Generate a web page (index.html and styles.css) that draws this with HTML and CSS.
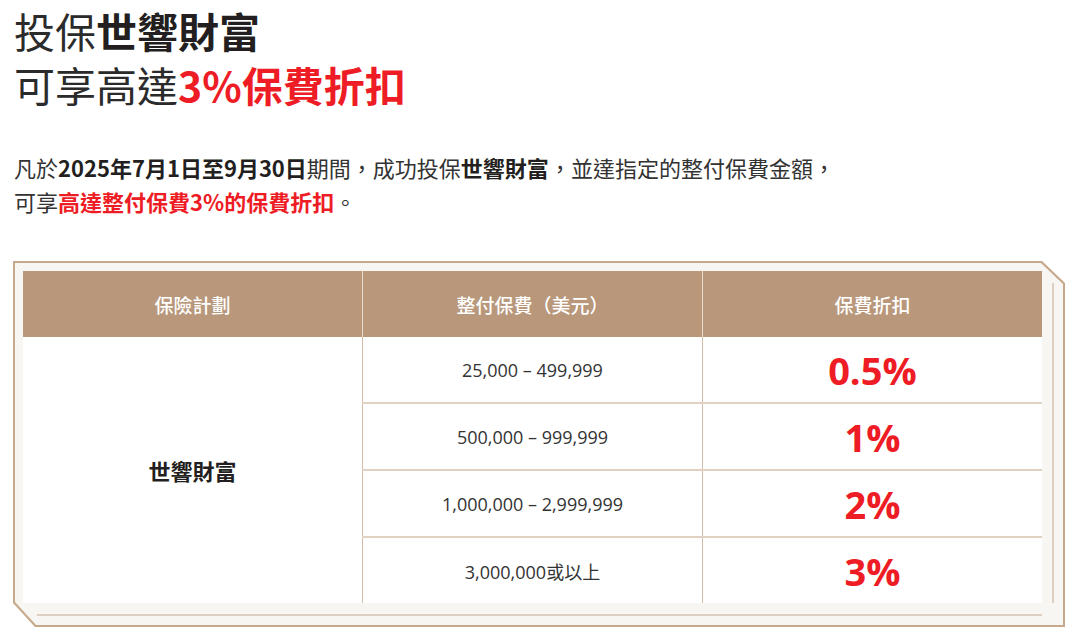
FILE: index.html
```html
<!DOCTYPE html>
<html lang="zh-Hant">
<head>
<meta charset="utf-8">
<title>投保世響財富</title>
<link rel="stylesheet" href="styles.css">
</head>
<body>
<div class="page">
  <h1 class="title">投保<b>世響財富</b><br>可享高達<span class="red">3%保費折扣</span></h1>
  <p class="intro">凡於<b class="num">2025年7月1日至9月30日</b>期間，成功投保<b>世響財富</b>，並達指定的整付保費金額，<br>可享<span class="red">高達整付保費3%的保費折扣</span>。</p>
  <div class="frame">
    <div class="frame-inner">
      <table class="rates">
        <thead>
          <tr><th>保險計劃</th><th>整付保費（美元）</th><th>保費折扣</th></tr>
        </thead>
        <tbody>
          <tr><td class="plan" rowspan="4">世響財富</td><td class="range">25,000 – 499,999</td><td class="pct">0.5%</td></tr>
          <tr><td class="range">500,000 – 999,999</td><td class="pct">1%</td></tr>
          <tr><td class="range">1,000,000 – 2,999,999</td><td class="pct">2%</td></tr>
          <tr><td class="range">3,000,000或以上</td><td class="pct">3%</td></tr>
        </tbody>
      </table>
    </div>
  </div>
</div>
</body>
</html>
```
FILE: styles.css
```css
html, body { margin: 0; background: #fff; }
body {
  font-family: "Noto Sans CJK TC", "Noto Sans", sans-serif;
  color: #333;
}
.page { padding: 3px 0 0 14px; }
.title {
  margin: 0;
  font-size: 41px;
  line-height: 54px;
  font-weight: 400;
  color: #2b2b2b;
}
.title b { font-weight: 700; color: #231f20; }
.red { color: #ee1c25; font-weight: 700; }
.intro {
  margin: 39px 0 0;
  font-size: 22px;
  line-height: 34px;
  color: #333;
}
.intro b { font-weight: 700; color: #231f20; }
.frame {
  margin: 43px 0 0 -1px;
  width: 1048px;
  height: 362px;
  padding: 2px;
  background: #c6a88b;
  clip-path: polygon(0 0, calc(100% - 23px) 0, 100% 22px, 100% 100%, 22px 100%, 0 calc(100% - 24px));
}
.frame-inner {
  position: relative;
  height: 100%;
  box-sizing: border-box;
  padding: 8px 21px 22px 8px;
  background: #f8f6f2;
  clip-path: polygon(0 0, calc(100% - 22px) 0, 100% 21px, 100% 100%, 21px 100%, 0 calc(100% - 23px));
}
.frame-inner::before {
  content: "";
  position: absolute;
  right: 9px;
  top: 20px;
  bottom: 22px;
  width: 2px;
  background: #ddd0c3;
}
.frame-inner::after {
  content: "";
  position: absolute;
  left: 22px;
  right: 21px;
  bottom: 9px;
  height: 2px;
  background: #ddd0c3;
}
.rates {
  width: 1019px;
  border-collapse: collapse;
  table-layout: fixed;
  background: #fff;
}
.rates th {
  height: 66px;
  padding: 0;
  background: #b8977b;
  color: #fff;
  font-size: 19px;
  font-weight: 500;
  border-left: 1px solid #e9ddd1;
}
.rates th:first-child { border-left: none; }
.rates td {
  height: 65px;
  padding: 0;
  text-align: center;
  border-top: 2px solid #e0d1c3;
  border-left: 1.5px solid #d4bca6;
}
.rates tbody tr:first-child td { border-top: none; }
.rates td.plan {
  border-left: none;
  font-size: 22px;
  font-weight: 700;
  color: #231f20;
}
.rates td.range {
  font-family: "Open Sans", "Noto Sans CJK TC", sans-serif;
  font-size: 18px;
  color: #333;
}
.rates td.pct {
  font-family: "Open Sans", sans-serif;
  font-size: 38px;
  font-weight: 700;
  color: #ee1c25;
}
```
